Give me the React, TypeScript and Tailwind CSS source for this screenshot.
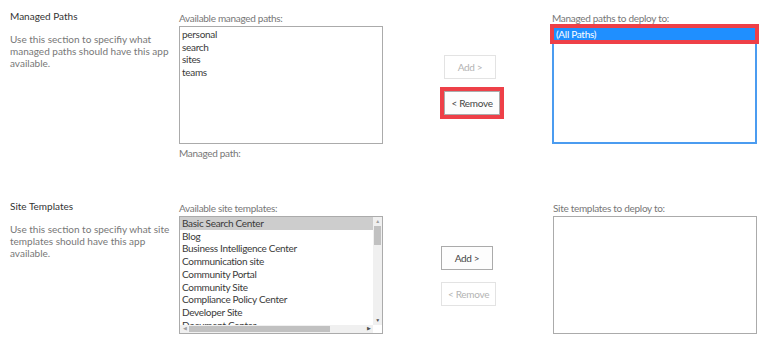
import React from 'react'

const font = "font-['Lato',sans-serif] tracking-[-0.3px]"

const templates = [
  'Basic Search Center',
  'Blog',
  'Business Intelligence Center',
  'Communication site',
  'Community Portal',
  'Community Site',
  'Compliance Policy Center',
  'Developer Site',
  'Document Center',
]

const Button = ({ label, width, disabled }: { label: string; width: string; disabled?: boolean }) => (
  <div
    className={
      disabled
        ? `${width} h-6 flex items-center justify-center border border-[#e3e3e3] bg-white text-[#b3b3b3] text-[10px]`
        : `${width} h-6 flex items-center justify-center border border-[#ababab] bg-[#fdfdfd] text-[#444] text-[10px]`
    }
  >
    {label}
  </div>
)

const SectionInfo = ({ title, lines }: { title: string; lines: string[] }) => (
  <div className="w-[179px] pl-[10px] shrink-0">
    <div className="text-[10px] leading-[14px] text-[#333] tracking-normal">{title}</div>
    <div className="mt-[10px] text-[10px] leading-[12px] text-[#777] tracking-normal">
      {lines.map((l) => (
        <div key={l} className="whitespace-nowrap">{l}</div>
      ))}
    </div>
  </div>
)

export default function App() {
  return (
    <div className={`${font} w-[775px] h-[341px] bg-white overflow-hidden`}>
      {/* Managed Paths */}
      <div className="flex pt-[9px] h-[199px]">
        <SectionInfo
          title="Managed Paths"
          lines={['Use this section to specifiy what', 'managed paths should have this app', 'available.']}
        />
        <div className="w-[204px] shrink-0 pt-[2px]">
          <div className="text-[10px] leading-[15px] text-[#777]">Available managed paths:</div>
          <div className="h-[118px] border border-[#ababab] px-[2px] pt-[1px] text-[10px] leading-[12.7px] text-[#3a3a3a]">
            <div>personal</div>
            <div>search</div>
            <div>sites</div>
            <div>teams</div>
          </div>
          <div className="mt-[2px] text-[10px] leading-[14px] text-[#777]">Managed path:</div>
        </div>
        <div className="w-[169px] shrink-0 pl-[61px] pt-[46px] flex flex-col items-start">
          <Button label="Add >" width="w-[52px]" disabled />
          <div className="mt-[8px] -ml-[4px] border-[4px] border-[#ee4048]">
            <Button label="< Remove" width="w-[56px]" />
          </div>
        </div>
        <div className="w-[205px] shrink-0 pt-[2px]">
          <div className="text-[10px] leading-[15px] text-[#777]">Managed paths to deploy to:</div>
          <div className="relative h-[118px] border-2 border-[#4b9cf0]">
            <div className="absolute -left-[4px] -right-[4px] -top-[4px] h-[20px] border-[4px] border-[#ee4048] bg-[#1f8fff] px-[2px] text-[10px] leading-[12px] text-white">
              (All Paths)
            </div>
          </div>
        </div>
      </div>

      {/* Site Templates */}
      <div className="flex">
        <SectionInfo
          title="Site Templates"
          lines={['Use this section to specifiy what site', 'templates should have this app', 'available.']}
        />
        <div className="w-[204px] shrink-0 pt-[2px]">
          <div className="text-[10px] leading-[15px] text-[#777]">Available site templates:</div>
          <div className="h-[118px] border border-[#ababab] flex flex-col">
            <div className="flex flex-1 min-h-0 overflow-hidden">
              <div className="flex-1 overflow-hidden text-[10px] leading-[12.7px] text-[#3a3a3a] whitespace-nowrap">
                {templates.map((t, i) => (
                  <div key={t} className={i === 0 ? 'bg-[#cdcdcd] px-[2px]' : 'px-[2px]'}>
                    {t}
                  </div>
                ))}
              </div>
              {/* vertical scrollbar */}
              <div className="w-[9px] bg-[#f0f0f0] flex flex-col items-center">
                <div className="h-[9px] flex items-center justify-center text-[5px] text-[#a0a0a0]">▲</div>
                <div className="w-[7px] h-[19px] bg-[#c1c1c1]" />
                <div className="flex-1" />
                <div className="h-[9px] flex items-center justify-center text-[5px] text-[#505050]">▼</div>
              </div>
            </div>
            {/* horizontal scrollbar */}
            <div className="h-[8px] flex bg-[#f0f0f0]">
              <div className="w-[9px] flex items-center justify-center text-[5px] text-[#a0a0a0]">◀</div>
              <div className="w-[141px] my-[1px] bg-[#c1c1c1]" />
              <div className="flex-1" />
              <div className="w-[9px] flex items-center justify-center text-[5px] text-[#505050]">▶</div>
              <div className="w-[9px] bg-white" />
            </div>
          </div>
        </div>
        <div className="w-[170px] shrink-0 pl-[58px] pt-[47px] flex flex-col items-start">
          <Button label="Add >" width="w-[52px]" />
          <div className="mt-[12px]">
            <Button label="< Remove" width="w-[55px]" disabled />
          </div>
        </div>
        <div className="w-[204px] shrink-0 pt-[2px]">
          <div className="text-[10px] leading-[15px] text-[#777]">Site templates to deploy to:</div>
          <div className="h-[118px] border border-[#ababab]" />
        </div>
      </div>
    </div>
  )
}
